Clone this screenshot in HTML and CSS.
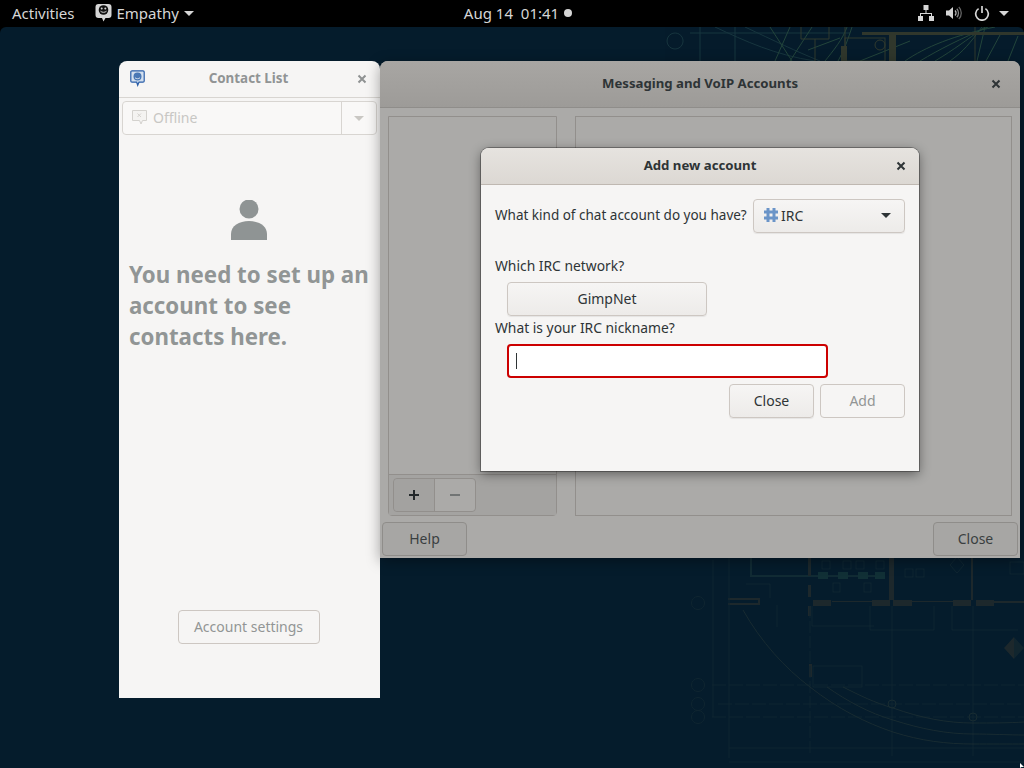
FILE: index.html
```html
<!DOCTYPE html>
<html lang="en">
<head>
    <meta charset="UTF-8">
    <title>Empathy</title>
    <link rel="stylesheet" href="styles.css">
</head>
<body>
    <div class="topbar">
        <div class="topbar-left">
            <span class="top-item">Activities</span>
            <span class="top-item app-menu">
                <svg class="app-icon" width="17" height="20" viewBox="0 0 17 20"><path fill="#d6d6d6" d="M3.500 1h10A3 3 0 0 1 16.500 4v8a3 3 0 0 1-3 3h-3l-2 3.500L7 15H3.500a3 3 0 0 1-3-3V4a3 3 0 0 1 3-3z"/><circle cx="8.500" cy="7" r="4.800" fill="#111"/><circle cx="6.700" cy="5.500" r="1" fill="#d6d6d6"/><circle cx="10.300" cy="5.500" r="1" fill="#d6d6d6"/><path d="M5.500 8.200c1.500 1.500 4.500 1.500 6 0" fill="none" stroke="#d6d6d6"/></svg>
                Empathy
                <span class="arrow arrow-top"></span>
            </span>
        </div>
        <div class="clock">Aug 14&nbsp; 01:41<span class="clock-dot"></span></div>
        <div class="topbar-right">
            <svg width="16" height="16" viewBox="0 0 16 16" fill="#d6d6d6"><rect x="5.500" y="0" width="5" height="5"/><rect x="0" y="11" width="5" height="5"/><rect x="11" y="11" width="5" height="5"/><path d="M7.500 5h1v3H14v3h-1V9H3v2H2V8h5.500z"/></svg>
            <svg width="16" height="16" viewBox="0 0 16 16"><path fill="#d6d6d6" d="M0 5.500h3L7 2v12l-4-3.500H0z"/><path d="M9 5.500a3.500 3.500 0 0 1 0 5" fill="none" stroke="#bbb" stroke-width="1.300"/><path d="M10.800 3.800a6 6 0 0 1 0 8.400" fill="none" stroke="#888" stroke-width="1.300"/><path d="M12.800 2a8.500 8.500 0 0 1 0 12" fill="none" stroke="#666" stroke-width="1.300"/></svg>
            <svg class="power" width="16" height="16" viewBox="0 0 16 16" fill="none" stroke="#d6d6d6" stroke-width="1.700"><path d="M4.600 3.600a6.300 6.300 0 1 0 6.800 0"/><path d="M8 1v7"/></svg>
            <span class="arrow arrow-top"></span>
        </div>
    </div>

    <div class="desktop">
        <svg class="wallpaper" width="1024" height="768" viewBox="0 0 1024 768" fill="none">
            <!-- upper part of the blueprint, over the accounts window -->
            <g stroke="#1c3c44" stroke-width="1">
                <path d="M690 33h160M675 33a8 8 0 1 0 .1 0"/>
                <path d="M700 27v34M735 27v34"/>
                <path d="M715 27c30 14 60 28 100 34M745 27c30 14 50 24 75 34"/>
            </g>
            <g stroke="#2b5040" stroke-width="1">
                <path d="M770 27l22 34M790 27l-15 34M812 27l-22 34M808 50l32-12"/>
                <path d="M825 61c8-10 18-22 22-34M838 61c6-10 10-22 14-34"/>
                <path d="M905 61c20-14 50-26 90-34M920 61c20-12 40-22 68-34M935 61c20-12 30-20 50-34M950 61c14-10 20-18 32-34"/>
                <path d="M985 27l-8 34M1000 35l-14 26M1018 36l-10 25M860 61l50-20"/>
            </g>
            <g stroke="#3c4230" stroke-width="1">
                <path d="M801 27v12h28v-12M815 39v22"/>
                <rect x="845" y="38" width="40" height="23"/>
                <circle cx="880" cy="45" r="5"/>
                <path d="M845 27v34M975 27v34"/>
            </g>
            <g fill="#3b3f2e">
                <rect x="862" y="32" width="162" height="3"/>
                <rect x="889" y="35" width="7" height="26"/>
                <rect x="841" y="46" width="6" height="15"/>
            </g>

            <!-- lower part, under the accounts window -->
            <g class="faint">
                <g stroke="#1c3a3c" stroke-width="2">
                    <path d="M751 558v18h58"/>
                    <path d="M809 576h75"/>
                </g>
                <g fill="#1f4440">
                    <rect x="818" y="572" width="10" height="7"/>
                    <rect x="838" y="572" width="10" height="7"/>
                    <rect x="858" y="572" width="10" height="7"/>
                    <rect x="875" y="572" width="10" height="7"/>
                </g>
                <g stroke="#1b3138" stroke-width="1">
                    <rect x="822" y="561" width="8" height="8"/>
                    <rect x="843" y="561" width="8" height="8"/>
                    <rect x="856" y="561" width="8" height="8"/>
                    <rect x="876" y="561" width="8" height="8"/>
                    <rect x="905" y="569" width="8" height="8"/>
                    <rect x="916" y="569" width="8" height="8"/>
                    <rect x="833" y="583" width="7" height="9"/>
                    <rect x="864" y="583" width="7" height="9"/>
                    <path d="M950 565l7-8 7 8-7 8z"/>
                    <rect x="1010" y="562" width="14" height="12"/>
                    <path d="M770 598v-14h-24M777 605v22M812 606v20h62M870 606v24h64v-24M952 606v24h66"/>
                </g>
                <g fill="#35352e">
                    <rect x="728" y="598" width="32" height="2"/>
                    <rect x="728" y="603" width="32" height="2"/>
                    <rect x="758" y="598" width="2" height="7"/>
                    <rect x="813" y="600" width="18" height="6"/>
                    <rect x="872" y="600" width="18" height="6"/>
                    <rect x="893" y="600" width="19" height="6"/>
                    <rect x="953" y="600" width="18" height="6"/>
                    <rect x="976" y="600" width="18" height="6"/>
                    <rect x="832" y="601" width="40" height="1"/>
                    <rect x="912" y="601" width="41" height="1"/>
                    <rect x="994" y="601" width="30" height="2"/>
                    <rect x="889" y="558" width="5" height="42"/>
                    <rect x="971" y="558" width="2" height="42"/>
                    <rect x="808" y="558" width="3" height="18"/>
                    <rect x="808" y="585" width="3" height="12"/>
                    <rect x="808" y="606" width="3" height="10"/>
                    <rect x="809" y="664" width="3" height="13"/>
                    <path d="M1004 648l10-11v22z"/>
                    <path d="M1014 637l10 11-10 11z" fill="#1f2f32"/>
                </g>
                <g stroke="#1a2f36" stroke-width="1">
                    <path d="M729 558v200M892 606v150M973 606v150"/>
                    <path d="M810 606v150" stroke-dasharray="12 3"/>
                    <path d="M712 685h312M718 704h306M712 717h312" stroke-dasharray="14 3"/>
                    <path d="M729 748h295M729 762h295"/>
                    <path d="M713 560v157"/>
                    <circle cx="698" cy="603" r="6.500"/>
                    <circle cx="698" cy="685" r="6.500"/>
                    <circle cx="698" cy="704" r="6.500"/>
                    <circle cx="698" cy="717" r="6.500"/>
                    <rect x="813" y="666" width="49" height="21"/>
                </g>
                <g stroke="#2a3a38" stroke-width="1">
                    <path d="M743 610c18 32 42 58 67 77 28 22 56 36 83 45 28 9 54 12 80 12 18 0 36 0 51 0"/>
                    <path d="M827 687c20 14 42 26 66 33 28 9 54 14 80 14 18 0 36 1 51 1"/>
                    <path d="M843 687c16 8 32 16 50 21 28 10 54 15 80 15 18 0 36 0 51-1"/>
                    <circle cx="892" cy="704" r="4"/>
                    <circle cx="973" cy="717" r="4"/>
                </g>
            </g>
        </svg>

        <div class="window contact-window">
            <div class="contact-header">
                <svg class="contact-logo" width="15" height="17" viewBox="0 0 15 17"><path fill="#d4e0ee" stroke="#2a5ea8" stroke-width="1.200" d="M2 .8h11a1.200 1.200 0 0 1 1.200 1.200v9a1.200 1.200 0 0 1-1.200 1.200H9l-1.300 3-1-3H2A1.200 1.200 0 0 1 .8 11V2A1.200 1.200 0 0 1 2 .8z"/><circle cx="7.500" cy="6.500" r="4" fill="#4a78b5"/><path d="M5 7.800c1.500 1.200 3.500 1.200 5 0" fill="none" stroke="#d4e0ee"/></svg>
                <span class="contact-title">Contact List</span>
                <svg class="close-x" width="10" height="10" viewBox="0 0 10 10"><path d="M1.500 1.500l7 7M8.500 1.500l-7 7" stroke="#8f9292" stroke-width="2"/></svg>
            </div>
            <div class="status-combo">
                <div class="status-main">
                    <svg width="17" height="17" viewBox="0 0 17 17"><path fill="#f4f3f1" stroke="#d4d2ce" d="M1.500 1.500h14v10h-4l-1.500 3.500-1.500-3.500h-7z"/><path d="M6.500 4.500l3.500 3.500M10 4.500l-3.500 3.500" stroke="#d4d2ce"/></svg>
                    <span>Offline</span>
                </div>
                <div class="status-arrow"><span class="arrow arrow-dim"></span></div>
            </div>
            <div class="empty-state">
                <svg class="person" width="36" height="40" viewBox="0 0 36 40" fill="#8f9494"><circle cx="18" cy="9" r="9.500"/><path d="M0 40v-6c0-8 8-13 18-13s18 5 18 13v6z"/></svg>
                <p class="empty-text">You need to set up an account to see contacts here.</p>
            </div>
            <div class="account-row">
                <div class="btn btn-disabled">Account settings</div>
            </div>
        </div>

        <div class="window accounts-window">
            <div class="accounts-header">
                <span>Messaging and VoIP Accounts</span>
                <svg class="close-x" width="10" height="10" viewBox="0 0 10 10"><path d="M1.500 1.500l7 7M8.500 1.500l-7 7" stroke="#2e3436" stroke-width="2"/></svg>
            </div>
            <div class="accounts-body">
                <div class="accounts-side">
                    <div class="side-list"></div>
                    <div class="side-toolbar">
                        <div class="toolbar-group">
                            <div class="tool-btn">
                                <svg width="10" height="10" viewBox="0 0 10 10"><path d="M0 5h10M5 0v10" stroke="#23282a" stroke-width="2"/></svg>
                            </div>
                            <div class="tool-btn tool-off">
                                <svg width="10" height="10" viewBox="0 0 10 10"><path d="M0 5h10" stroke="#717474" stroke-width="2"/></svg>
                            </div>
                        </div>
                    </div>
                </div>
                <div class="accounts-detail"></div>
            </div>
            <div class="accounts-footer">
                <div class="btn btn-dim">Help</div>
                <div class="btn btn-dim">Close</div>
            </div>
        </div>

        <div class="window add-dialog">
            <div class="dialog-header">
                <span>Add new account</span>
                <svg class="close-x" width="10" height="10" viewBox="0 0 10 10"><path d="M1.500 1.500l7 7M8.500 1.500l-7 7" stroke="#2e3436" stroke-width="2"/></svg>
            </div>
            <div class="dialog-body">
                <div class="kind-row">
                    <span class="kind-label">What kind of chat account do you have?</span>
                    <div class="btn kind-combo">
                        <svg width="16" height="16" viewBox="0 0 16 16" stroke="#6a94c8" stroke-width="3"><path d="M5 1v14M11 1v14M1 5h14M1 11h14"/></svg>
                        <span class="kind-name">IRC</span>
                        <span class="arrow arrow-dark"></span>
                    </div>
                </div>
                <div class="field-label network-label">Which IRC network?</div>
                <div class="btn network-btn">GimpNet</div>
                <div class="field-label nick-label">What is your IRC nickname?</div>
                <div class="nick-entry"><span class="caret"></span></div>
                <div class="dialog-actions">
                    <div class="btn action-btn">Close</div>
                    <div class="btn action-btn btn-disabled">Add</div>
                </div>
            </div>
        </div>

        <svg class="pointer" width="4" height="5" viewBox="0 0 4 5"><path d="M0 0l4 4H1.500L0 5z" fill="#fff"/></svg>
    </div>
</body>
</html>
```

FILE: styles.css
```css
* {
    box-sizing: border-box;
}

body {
    margin: 0;
    width: 1024px;
    height: 768px;
    overflow: hidden;
    background-color: #000;
    font-family: "Noto Sans", sans-serif;
    font-size: 14px;
    color: #2e3436;
}

/* top bar */
.topbar {
    height: 27px;
    background-color: #000;
    color: #d6d6d6;
    font-size: 15px;
    display: grid;
    grid-template-columns: 1fr auto 1fr;
    align-items: center;
    padding: 0 0 1px 12px;
}

.topbar-left {
    display: flex;
    align-items: center;
    gap: 20px;
}

.top-item {
    display: flex;
    align-items: center;
    gap: 5px;
}

.clock {
    display: flex;
    align-items: center;
}

.clock-dot {
    width: 8px;
    height: 8px;
    border-radius: 50%;
    background-color: #d6d6d6;
    margin-left: 5px;
}

.topbar-right {
    display: flex;
    align-items: center;
    justify-content: flex-end;
    gap: 12px;
    padding-right: 15px;
}

.power {
    margin: 0 -3px 0 0;
}

.arrow {
    display: inline-block;
    width: 0;
    height: 0;
    border-left: 5px solid transparent;
    border-right: 5px solid transparent;
    border-top: 5px solid #d6d6d6;
}

.arrow-dim {
    border-top-color: #c9c7c3;
}

.arrow-dark {
    border-top-color: #2e3436;
}

/* desktop */
.desktop {
    position: absolute;
    top: 27px;
    left: 0;
    width: 1024px;
    height: 741px;
    background-color: #051c2c;
    border-radius: 6px 6px 0 0;
    overflow: hidden;
}

.wallpaper {
    position: absolute;
    top: -27px;
    left: 0;
    opacity: 0.8;
}

.faint {
    opacity: 0.65;
}

.pointer {
    position: absolute;
    right: 0;
    bottom: 0;
}

.window {
    position: absolute;
    background-color: #f6f5f4;
    display: flex;
    flex-direction: column;
}

.close-x {
    position: absolute;
    right: 13px;
    top: 50%;
    margin-top: -5px;
}

/* contact list */
.contact-window {
    left: 119px;
    top: 34px;
    width: 261px;
    height: 637px;
    border-radius: 8px 8px 0 0;
}

.contact-header {
    position: relative;
    height: 37px;
    flex: none;
    display: flex;
    align-items: center;
    justify-content: center;
    padding: 0 2px 2px 0;
    border-bottom: 1px solid #d8d5d1;
}

.contact-logo {
    position: absolute;
    left: 11px;
    top: 9px;
}

.contact-title {
    font-size: 13.4px;
    font-weight: 700;
    color: #919494;
}

.status-combo {
    flex: none;
    display: flex;
    height: 34px;
    margin: 3px 3px 0;
    border: 1px solid #d8d5d1;
    border-radius: 4px;
    background-color: #f9f8f7;
    color: #c8c7c4;
}

.status-main {
    flex: 1;
    display: flex;
    align-items: center;
    gap: 5px;
    padding: 0 0 2px 8px;
}

.status-arrow {
    width: 35px;
    display: flex;
    align-items: center;
    justify-content: center;
    border-left: 1px solid #d8d5d1;
}

.empty-state {
    flex: 1;
    display: flex;
    flex-direction: column;
    padding: 65px 4px 0 10px;
}

.person {
    align-self: center;
    margin: 0 8px 19px 0;
}

.empty-text {
    margin: 0;
    font-size: 22.3px;
    line-height: 31px;
    font-weight: 700;
    color: #919595;
}

.account-row {
    flex: none;
    display: flex;
    justify-content: center;
    padding: 0 2px 54px 0;
}

/* buttons */
.btn {
    display: flex;
    align-items: center;
    justify-content: center;
    height: 34px;
    padding-bottom: 2px;
    border: 1px solid #cdc7c2;
    border-radius: 4px;
    background: linear-gradient(#f6f5f4, #edebe9);
    box-shadow: 0 1px 1px rgba(0, 0, 0, 0.07);
    color: #2e3436;
}

.btn-disabled {
    background: #f6f5f4;
    box-shadow: none;
    color: #929595;
}

.account-row .btn {
    width: 142px;
}

/* accounts window, dimmed behind the dialog */
.accounts-window {
    left: 380px;
    top: 34px;
    width: 640px;
    height: 497px;
    background-color: #abaaa8;
    border-radius: 8px 8px 0 0;
    box-shadow: 0 3px 14px rgba(0, 0, 0, 0.35);
}

.accounts-header {
    position: relative;
    height: 47px;
    flex: none;
    display: flex;
    align-items: center;
    justify-content: center;
    padding-bottom: 2px;
    background: linear-gradient(#a8a6a3, #9d9b98);
    border-bottom: 1px solid #8f8d8a;
    border-radius: 8px 8px 0 0;
    font-size: 13.2px;
    font-weight: 700;
}

.accounts-header .close-x {
    right: 19px;
}

.accounts-body {
    flex: 1;
    display: flex;
    gap: 18px;
    padding: 8px 8px 0;
}

.accounts-side {
    width: 169px;
    height: 400px;
    display: flex;
    flex-direction: column;
    border: 1px solid #928f8c;
    border-radius: 0 0 4px 4px;
}

.side-list {
    flex: 1;
    border-bottom: 1px solid #928f8c;
}

.side-toolbar {
    height: 40px;
    background-color: #a4a3a1;
    padding: 3px 4px;
}

.toolbar-group {
    display: flex;
    width: 83px;
    height: 34px;
    border: 1px solid #928f8c;
    border-radius: 4px;
}

.tool-btn {
    width: 42px;
    display: flex;
    align-items: center;
    justify-content: center;
    background-color: #a3a2a0;
    border-right: 1px solid #928f8c;
    border-radius: 4px 0 0 4px;
}

.tool-off {
    width: 41px;
    border-right: none;
    border-radius: 0 4px 4px 0;
    background-color: #abaaa8;
}

.accounts-detail {
    width: 437px;
    height: 400px;
    border: 1px solid #928f8c;
}

.accounts-footer {
    flex: none;
    display: flex;
    justify-content: space-between;
    padding: 0 2px 2px;
}

.btn-dim {
    width: 85px;
    background: #a7a6a4;
    border-color: #8f8d8a;
    box-shadow: none;
    color: #3a3f41;
}

/* add new account dialog */
.add-dialog {
    left: 481px;
    top: 121px;
    width: 438px;
    height: 323px;
    border-radius: 8px 8px 0 0;
    box-shadow: 0 3px 12px rgba(0, 0, 0, 0.45), 0 0 0 1px rgba(0, 0, 0, 0.3);
}

.dialog-header {
    position: relative;
    height: 37px;
    flex: none;
    display: flex;
    align-items: center;
    justify-content: center;
    padding-bottom: 2px;
    background: linear-gradient(#e6e3df, #dcd8d3);
    border-bottom: 1px solid #bfb8b1;
    border-radius: 8px 8px 0 0;
    font-size: 13.2px;
    font-weight: 700;
}

.dialog-body {
    flex: 1;
    display: flex;
    flex-direction: column;
    padding: 14px 14px 0;
}

.kind-row {
    display: flex;
    justify-content: space-between;
    align-items: center;
}

.kind-label {
    white-space: nowrap;
    font-size: 13.5px;
    padding-bottom: 2px;
}

.kind-combo {
    width: 152px;
    flex: none;
    justify-content: flex-start;
    padding: 0 13px 2px 9px;
    gap: 2px;
}

.kind-name {
    flex: 1;
}

.field-label {
    height: 20px;
    line-height: 20px;
    font-size: 13.85px;
}

.network-label {
    margin-top: 23px;
}

.network-btn {
    width: 200px;
    margin: 6px 0 0 12px;
}

.nick-label {
    margin-top: 2px;
}

.nick-entry {
    width: 321px;
    height: 34px;
    margin: 6px 0 0 12px;
    padding: 7px 7px;
    background-color: #fff;
    border: 2px solid #cc0000;
    border-radius: 4px;
}

.caret {
    display: block;
    width: 1px;
    height: 16px;
    background-color: #2e3436;
}

.dialog-actions {
    display: flex;
    justify-content: flex-end;
    gap: 6px;
    margin-top: 6px;
}

.action-btn {
    width: 85px;
}
```
